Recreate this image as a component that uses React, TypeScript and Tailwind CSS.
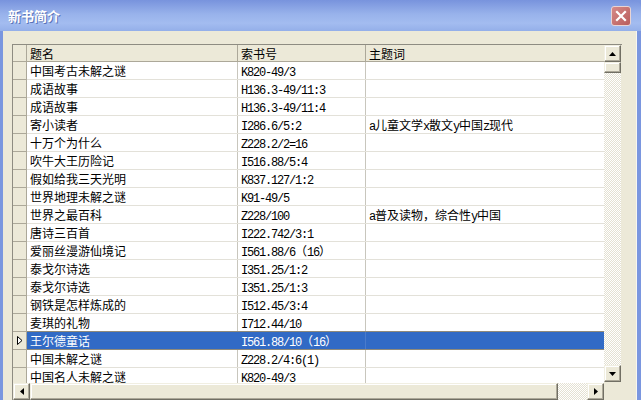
const rows: [string, string, string][] = [
  ['中国考古未解之谜', 'K820-49/3', ''],
  ['成语故事', 'H136.3-49/11:3', ''],
  ['成语故事', 'H136.3-49/11:4', ''],
  ['寄小读者', 'I286.6/5:2', 'a儿童文学x散文y中国z现代'],
  ['十万个为什么', 'Z228.2/2=16', ''],
  ['吹牛大王历险记', 'I516.88/5:4', ''],
  ['假如给我三天光明', 'K837.127/1:2', ''],
  ['世界地理未解之谜', 'K91-49/5', ''],
  ['世界之最百科', 'Z228/100', 'a普及读物，综合性y中国'],
  ['唐诗三百首', 'I222.742/3:1', ''],
  ['爱丽丝漫游仙境记', 'I561.88/6（16）', ''],
  ['泰戈尔诗选', 'I351.25/1:2', ''],
  ['泰戈尔诗选', 'I351.25/1:3', ''],
  ['钢铁是怎样炼成的', 'I512.45/3:4', ''],
  ['麦琪的礼物', 'I712.44/10', ''],
  ['王尔德童话', 'I561.88/10（16）', ''],
  ['中国未解之谜', 'Z228.2/4:6(1)', ''],
  ['中国名人未解之谜', 'K820-49/3', ''],
];

const SELECTED = 15;

// ascii runs get a narrow mono face, like the half-width glyphs of the original
function Txt({ s }: { s: string }) {
  const parts = s.split(/([\x00-\x7f]+)/).filter(Boolean);
  return (
    <>
      {parts.map((p, i) =>
        /^[\x00-\x7f]+$/.test(p) ? (
          <span key={i} className="font-['Liberation_Mono'] text-[12px] tracking-[-1.2px]">{p}</span>
        ) : (
          <span key={i}>{p}</span>
        )
      )}
    </>
  );
}

const raised =
  'bg-[#ece9d8] border border-t-[#f1efe2] border-l-[#f1efe2] border-b-[#716f64] border-r-[#716f64] shadow-[inset_-1px_-1px_0_#aca899,inset_1px_1px_0_#ffffff]';

function Arrow({ dir }: { dir: 'up' | 'down' | 'left' | 'right' }) {
  const pts = {
    up: '0,4 7,4 3.5,0',
    down: '0,0 7,0 3.5,4',
    left: '4,0 4,7 0,3.5',
    right: '0,0 0,7 4,3.5',
  }[dir];
  const w = dir === 'up' || dir === 'down' ? 7 : 4;
  const h = dir === 'up' || dir === 'down' ? 4 : 7;
  return (
    <svg width={w} height={h} viewBox={`0 0 ${w} ${h}`}>
      <polygon points={pts} fill="#000" />
    </svg>
  );
}

const track = 'bg-[repeating-conic-gradient(#ffffff_0_25%,#e4e1d2_0_50%)] bg-[length:2px_2px]';

export default function App() {
  return (
    <div className="w-[641px] h-[400px] overflow-hidden flex flex-col bg-[#7a96df] font-['Noto_Sans_CJK_SC',sans-serif] text-[12px] text-black">
      <div className="h-[31px] shrink-0 flex items-center justify-between pl-2 pr-[10px] bg-[linear-gradient(#7893dd,#98b2eb_45%,#a3bcf0_75%,#94afe9)] rounded-tr-[7px]">
        <span className="text-white font-bold text-[13px] [text-shadow:1px_1px_0_#5a74b8]">新书简介</span>
        <div className="w-5 h-5 rounded-[3px] border border-[#e8d4d4] bg-[linear-gradient(135deg,#d68a88,#b95d5c)] flex items-center justify-center">
          <svg width="12" height="12" viewBox="0 0 12 12">
            <path d="M2 2 L10 10 M10 2 L2 10" stroke="#fff" strokeWidth="2.2" strokeLinecap="square" />
          </svg>
        </div>
      </div>
      <div className="flex-1 flex min-h-0">
        <div className="w-[3px] shrink-0 bg-[#7a96df]" />
        <div className="flex-1 bg-[#ece9d8] pt-[13px] pl-[9px] pr-[14px] border-r border-[#f7f6f0]">
          <div className="flex h-[356px] border-t border-l border-[#8e8c82]">
            <div className="w-[591px] flex flex-col">
              <div className="h-[338px] overflow-hidden bg-white">
                <div className="flex h-[17px] bg-[#ece9d8] border-b border-[#aca899]">
                  <div className="w-[14px] border-r border-[#aca899]" />
                  <div className="w-[211px] pl-[3px] leading-[17px] border-r border-[#aca899]">题名</div>
                  <div className="w-[128px] pl-[3px] leading-[17px] border-r border-[#aca899]">索书号</div>
                  <div className="flex-1 pl-[3px] leading-[17px]">主题词</div>
                </div>
                {rows.map((r, i) => {
                  const sel = i === SELECTED;
                  return (
                    <div key={i} className="flex h-[18px]">
                      <div className="w-[14px] bg-[#ece9d8] border-r border-b border-[#aca899] flex items-center justify-center">
                        {sel && (
                          <svg width="6" height="9" viewBox="0 0 6 9">
                            <path d="M0.5 0.5 L5 4.5 L0.5 8.5 Z" fill="#fff" stroke="#000" strokeWidth="1" />
                          </svg>
                        )}
                      </div>
                      <div
                        className={`flex-1 flex ${sel ? 'bg-[#316ac5] text-white border-y border-[#8f8a7a] -mt-px h-[19px]' : 'border-b border-[#e3e1d9]'}`}
                      >
                        <div className={`w-[211px] pl-[3px] leading-[17px] whitespace-nowrap overflow-hidden border-r ${sel ? 'border-[#316ac5]' : 'border-[#c8c6bd]'}`}>
                          <Txt s={r[0]} />
                        </div>
                        <div className={`w-[128px] pl-[3px] leading-[17px] whitespace-nowrap overflow-hidden border-r ${sel ? 'border-[#4a7bcb]' : 'border-[#c8c6bd]'}`}>
                          <Txt s={r[1]} />
                        </div>
                        <div className="flex-1 pl-[3px] leading-[17px] whitespace-nowrap overflow-hidden">
                          <Txt s={r[2]} />
                        </div>
                      </div>
                    </div>
                  );
                })}
              </div>
              <div className="h-[17px] flex">
                <div className={`w-[17px] flex items-center justify-center ${raised}`}>
                  <Arrow dir="left" />
                </div>
                <div className={`w-[528px] ${raised}`} />
                <div className={`flex-1 ${track}`} />
                <div className={`w-[17px] flex items-center justify-center ${raised}`}>
                  <Arrow dir="right" />
                </div>
              </div>
            </div>
            <div className="w-[17px] flex flex-col">
              <div className={`h-[17px] flex items-center justify-center ${raised}`}>
                <Arrow dir="up" />
              </div>
              <div className={`h-[11px] ${raised}`} />
              <div className={`flex-1 ${track}`} />
              <div className={`h-[17px] flex items-center justify-center ${raised}`}>
                <Arrow dir="down" />
              </div>
              <div className="h-[18px] bg-[#ece9d8]" />
            </div>
          </div>
        </div>
        <div className="w-[4px] shrink-0 bg-[#7a96df]" />
      </div>
    </div>
  );
}
